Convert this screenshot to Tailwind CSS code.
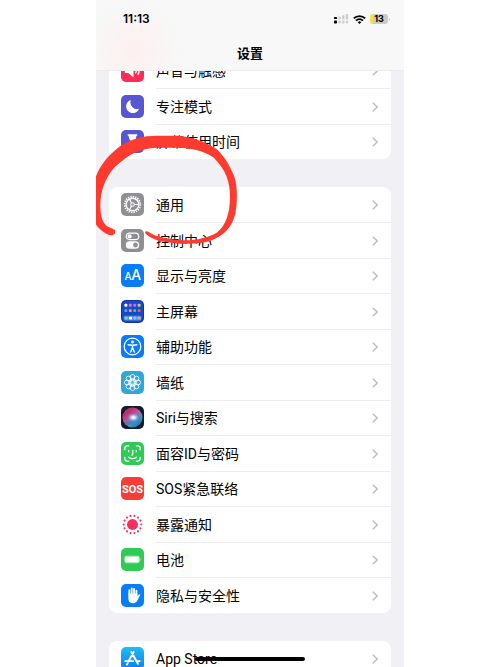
<!DOCTYPE html>
<html lang="zh-CN">
<head>
    <meta charset="UTF-8">
    <meta name="viewport" content="width=device-width, initial-scale=1.0">
    <title>设置</title>
    <script src="https://cdn.jsdelivr.net/npm/@tailwindcss/browser@4"></script>
</head>
<body class="bg-white font-[Roboto,'Noto_Sans_CJK_SC',sans-serif] text-black">
    <div class="relative mx-auto h-screen w-full max-w-[308px] overflow-hidden bg-[#f0f0f5]">
        <!-- Status bar + title -->
        <header class="relative z-10 border-b border-[#ececee] bg-[#f8f8f8] bg-radial-[circle_at_12%_72%] from-[#fdf0ef] to-[#f8f8f8] to-18%">
            <div class="flex h-[38px] items-center justify-between pr-3.5 pl-[27px]">
                <span class="font-[Inter,sans-serif] text-[12px] font-semibold">11:13</span>
                <div class="flex items-center gap-1">
                    <svg class="h-[10px] w-[15px]" viewBox="0 0 15 10">
                        <g fill="#000"><rect x="0" y="3" width="3" height="2" rx=".6"/><rect x="0" y="6.5" width="3" height="3" rx=".8"/></g>
                        <g fill="#cfcfcf">
                            <rect x="4.3" y="2.4" width="2.5" height="3" rx=".6"/><rect x="4.3" y="6.6" width="2.5" height="2.8" rx=".6"/>
                            <rect x="8" y="1.2" width="2.5" height="4.4" rx=".6"/><rect x="8" y="6.6" width="2.5" height="2.8" rx=".6"/>
                            <rect x="11.7" y="0" width="2.5" height="5.6" rx=".6"/><rect x="11.7" y="6.6" width="2.5" height="2.8" rx=".6"/>
                        </g>
                    </svg>
                    <svg class="h-[9px] w-[13px]" viewBox="0 0 13 9" fill="none" stroke="#000" stroke-width="1.8">
                        <path d="M.8 3.4a8.1 8.1 0 0 1 11.4 0M3 5.7a5 5 0 0 1 7 0"/>
                        <path d="M6.5 9 4.7 7.2a2.6 2.6 0 0 1 3.6 0z" fill="#000" stroke="none"/>
                    </svg>
                    <div class="flex items-center gap-px">
                        <span class="flex h-[10px] w-[18px] items-center justify-center rounded-[3px] bg-linear-to-r from-[#f5e04a] from-18% to-[#cbcbcb] to-18% font-[Inter,sans-serif] text-[9px] font-bold">13</span>
                        <span class="h-[3px] w-px rounded-r bg-[#cbcbcb]"></span>
                    </div>
                </div>
            </div>
            <h1 class="h-8 pt-1.5 text-center text-[13px] leading-5 font-bold">设置</h1>
        </header>

        <!-- Lists, scrolled partly under the header -->
        <main id="settings" class="-mt-[18px] flex flex-col gap-7 px-[13px]"></main>

        <!-- Hand-drawn marker -->
        <svg class="pointer-events-none absolute top-[125px] -left-[6px] z-20 h-[130px] w-[160px]" viewBox="0 0 480 390">
            <path fill="#ff3a2f" d="M74 314C80 322 72 333 60 331C42 325 22 308 16 295L12 170C28 120 55 90 95 60C125 42 160 32 200 32L265 32C310 36 350 52 380 72C405 95 420 125 432 152C444 185 442 235 436 265C428 305 402 333 360 348C320 360 260 357 222 350C195 345 172 334 165 323C167 318 171 317 177 322C197 335 230 342 270 345C310 348 350 340 380 323C408 302 420 262 420 215C420 170 408 135 370 97C340 76 300 68 260 68L200 68C150 70 120 85 75 125C45 158 31 200 31 240C32 270 34 288 50 303Z"/>
        </svg>

        <!-- Home indicator -->
        <div class="absolute inset-x-0 bottom-1.5 z-20 mx-auto h-1 w-[110px] rounded-full bg-black"></div>
    </div>

    <script>
        const dots = (n, r, size) => Array.from({ length: n }, (_, i) => {
            const a = i * 2 * Math.PI / n;
            return `<circle cx="${12 + r * Math.cos(a)}" cy="${12 + r * Math.sin(a)}" r="${size}"/>`;
        }).join("");

        const homeColors = ["#fff", "#e86fb0", "#d85cf0", "#b9d36a", "#4fa8ff", "#ff9d4a", "#35d07c", "#ff5364"];
        const homeApps = homeColors.map((c, i) => `<rect x="${3.6 + (i % 4) * 4.6}" y="${4 + Math.floor(i / 4) * 5.6}" width="3" height="3" rx=".8" fill="${c}"/>`).join("");

        // 24x24 artwork, drawn over each row's tile colour
        const icons = {
            sound: `<path d="M4 9.5h3.5L13 5v14l-5.5-4.5H4z" fill="#fff"/><path d="M15 9q2 3 0 6M17.5 7.5q3 4.5 0 9" fill="none" stroke="#fff" stroke-width="1.4"/>`,
            moon: `<path d="M10.3 5.2a7 7 0 1 0 8.6 9.2A7 7 0 0 1 10.3 5.2z" fill="#fff"/>`,
            hourglass: `<path d="M7 4.5h10v1.500h-1q0 4-3 6 3 2 3 6h1v1.500H7V18h1q0-4 3-6-3-2-3-6H7z" fill="#fff"/>`,
            gear: `<g fill="none" stroke="#fff"><circle cx="12" cy="12" r="8.2" stroke-width="1.8" stroke-dasharray="1.4 1.176"/><circle cx="12" cy="12" r="6.6" stroke-width="1.5"/><circle cx="12" cy="12" r="1.9" stroke-width="1.1"/><path d="M14 12h4.600M11 10.300 8.700 6.300M11 13.700l-2.300 4" stroke-width="1.2"/></g>`,
            toggles: `<rect x="5.5" y="4.300" width="13" height="6.800" rx="3.400" fill="none" stroke="#fff" stroke-width="1.2"/><circle cx="9" cy="7.7" r="2.2" fill="#fff"/><rect x="5" y="12.8" width="14" height="7.8" rx="3.9" fill="#fff"/><circle cx="15.1" cy="16.7" r="2.5" fill="#8e8e93"/>`,
            letters: `<g fill="#fff" font-family="Inter, sans-serif" font-weight="500"><text x="3.6" y="17.2" font-size="10.5">A</text><text x="10.6" y="17.2" font-size="14.5">A</text></g>`,
            home: `<rect x="1" y="1" width="22" height="22" rx="5" fill="#1749c9"/>${homeApps}<rect x="2.800" y="16.500" width="18.400" height="4.800" rx="1.5" fill="#5a8fe0"/><rect x="4" y="17.4" width="3" height="3" rx=".8" fill="#66dca0"/><rect x="8.5" y="17.4" width="3" height="3" rx=".8" fill="#fff"/><rect x="13" y="17.4" width="3" height="3" rx=".8" fill="#72c4ff"/><rect x="17.4" y="17.4" width="3" height="3" rx=".8" fill="#e3a395"/>`,
            access: `<circle cx="12" cy="12" r="8.7" fill="none" stroke="#fff" stroke-width="1.3"/><circle cx="12" cy="7.3" r="1.5" fill="#fff"/><path d="M7.5 10.2 11 10.7h2l3.5-.5M12 10.700v3M12 13l-1.900 4.800M12 13l1.900 4.800" fill="none" stroke="#fff" stroke-width="1.5" stroke-linecap="round"/>`,
            flower: `<g fill="none" stroke="#fff" stroke-width=".9">${dots(8, 5.7, 2.6)}${dots(8, 2.9, 1.2)}</g>`,
            siri: `<defs><radialGradient id="glow"><stop offset="0" stop-color="#fff"/><stop offset=".3" stop-color="#d9ecff" stop-opacity=".9"/><stop offset="1" stop-color="#3e8bd8" stop-opacity="0"/></radialGradient><linearGradient id="orb" x2=".8" y2="1"><stop offset="0" stop-color="#3f9a86"/><stop offset=".25" stop-color="#c02a68"/><stop offset=".5" stop-color="#b45a9f"/><stop offset=".75" stop-color="#3a9fc4"/><stop offset="1" stop-color="#1f6ea0"/></linearGradient></defs><circle cx="12" cy="12" r="10.5" fill="url(#orb)"/><path d="M3 16q9 2 18-7-1 12-9 12.500Q5 21 3 16z" fill="#3978c9" opacity=".5"/><ellipse cx="13" cy="12" rx="7" ry="5" fill="url(#glow)"/>`,
            face: `<path d="M4 8V6.500Q4 4 6.500 4H8M16 4h1.500Q20 4 20 6.500V8M20 16v1.500q0 2.500-2.500 2.500H16M8 20H6.500Q4 20 4 17.500V16M8 8.700v1.600M16 8.700v1.600M12.300 8.700v4.100q0 .9-1.100.9M8 15.800q4 3 8 0" fill="none" stroke="#fff" stroke-width="1.3" stroke-linecap="round"/>`,
            sos: `<text x="12" y="16.5" text-anchor="middle" fill="#fff" font-family="'Liberation Sans Narrow', Roboto, sans-serif" font-size="11.5" font-weight="700">SOS</text>`,
            exposure: `<g fill="#fc2d5c"><circle cx="12" cy="12" r="5.7"/>${dots(14, 9.2, 1.1)}</g>`,
            battery: `<rect x="4" y="8.6" width="15" height="6.8" rx="1.5" fill="#fff" stroke="#a9edb5" stroke-width="1"/><path d="M20.5 10.5q1.5 1.5 0 3z" fill="#c5f5cd"/>`,
            hand: `<path d="M8.7 11V6.4M11.2 11V4.6M13.7 11V5M16.1 12V7" stroke="#fff" stroke-width="1.9" stroke-linecap="round"/><path d="M7.7 10h9.400v3l1-1.500q1.200-1.400 2-.4l-2.600 5.300Q15.900 20 12.500 20 7.700 20 7.700 15z" fill="#fff"/>`,
            store: `<path d="m13.2 5.3-5.700 10M10.8 5.3l6.900 12.200M4.400 14.700h8.300M16.300 14.700h3.300M6.800 17.200l-.6 1" fill="none" stroke="#fff" stroke-width="2" stroke-linecap="round"/>`
        };

        const groups = [
            [
                ["声音与触感", "sound", "bg-[#ff2d55]"],
                ["专注模式", "moon", "bg-[#5856d0]"],
                ["屏幕使用时间", "hourglass", "bg-[#5856d0]"]
            ],
            [
                ["通用", "gear", "bg-[#8e8e93]"],
                ["控制中心", "toggles", "bg-[#8e8e93]"],
                ["显示与亮度", "letters", "bg-[#087cf9]"],
                ["主屏幕", "home", "bg-[#1233a3]"],
                ["辅助功能", "access", "bg-[#087cf9]"],
                ["墙纸", "flower", "bg-[#32a6d8]"],
                ["Siri与搜索", "siri", "bg-[#171a2b]"],
                ["面容ID与密码", "face", "bg-[#30cb57]"],
                ["SOS紧急联络", "sos", "bg-[#f83c36]"],
                ["暴露通知", "exposure", "bg-white"],
                ["电池", "battery", "bg-[#30cb57]"],
                ["隐私与安全性", "hand", "bg-[#087cf9]"]
            ],
            [
                ["App Store", "store", "bg-linear-to-b from-[#20bdf8] to-[#1878ef]"]
            ]
        ];

        document.getElementById("settings").innerHTML = groups.map(rows => `
            <nav class="overflow-hidden rounded-lg bg-white">
                ${rows.map(([label, icon, tile]) => `
                    <a href="#${icon}" class="group flex items-center gap-3 pl-3 odd:h-[35px] even:h-9">
                        <span class="size-[23px] shrink-0 overflow-hidden rounded-[5px] ${tile}">
                            <svg class="size-full" viewBox="0 0 24 24" fill="none">${icons[icon]}</svg>
                        </span>
                        <span class="flex h-full flex-1 items-center justify-between border-t border-[#ededf0] pr-[13px] group-first:border-transparent">
                            <span class="text-[14px] leading-5">${label}</span>
                            <svg class="h-[10px] w-[6px]" viewBox="0 0 6 10" fill="none" stroke="#bcbcc0" stroke-width="1.4"><path d="m.8.8 4.400 4.200L.8 9.200"/></svg>
                        </span>
                    </a>`).join("")}
            </nav>`).join("");
    </script>
</body>
</html>
